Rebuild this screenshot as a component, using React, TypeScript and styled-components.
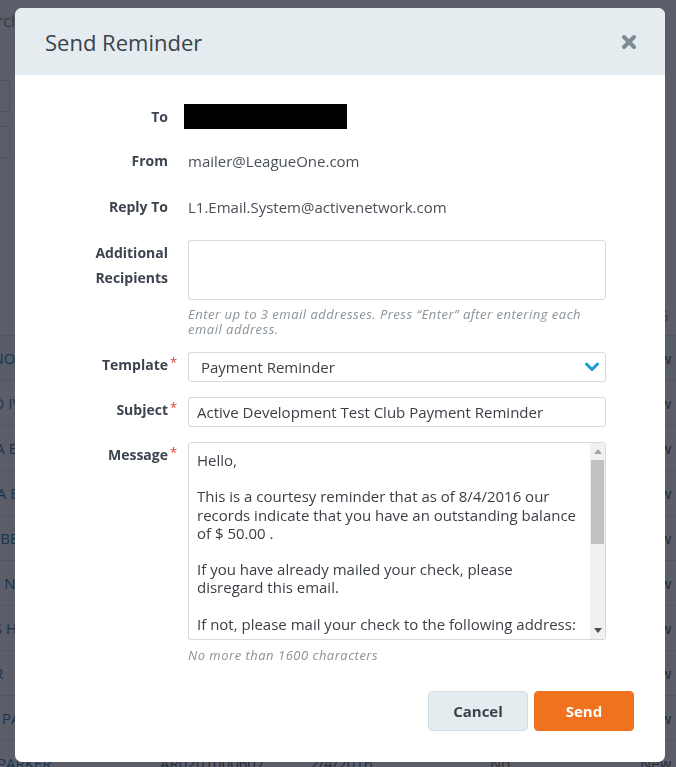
import React from "react";
import styled, { createGlobalStyle } from "styled-components";

const GlobalStyle = createGlobalStyle`
  html, body {
    margin: 0;
    padding: 0;
    background: #ffffff;
    font-family: "Open Sans", Lato, Arial, sans-serif;
  }
  * { box-sizing: border-box; }
`;

const rows = [
  { name: "CONNOR YOUNG", id: "AR0201000598" },
  { name: "DAVID IVINS", id: "AR0201000599" },
  { name: "EMMA BARNES", id: "AR0201000600" },
  { name: "OLIVIA BAILEY", id: "AR0201000601" },
  { name: "LUKE BENSON", id: "AR0201000602" },
  { name: "ANNE NEWTON", id: "AR0201000603" },
  { name: "CHRIS HRUBY", id: "AR0201000604" },
  { name: "PETER", id: "AR0201000605" },
  { name: "JOHN PARKER", id: "AR0201000606" },
  { name: "JANE PARKER", id: "AR0201000607" },
];

const message = `Hello,

This is a courtesy reminder that as of 8/4/2016 our
records indicate that you have an outstanding balance
of $ 50.00 .

If you have already mailed your check, please
disregard this email.

If not, please mail your check to the following address:

Active Development Test Club
1 Main Street
San Diego, CA 92121

Thank you,
Active Development Test Club`;

/* ---------- page behind the dialog ---------- */

const Page = styled.div`
  height: 767px;
  overflow: hidden;
  padding-top: 10px;
  color: #333;
`;

const PageTitle = styled.div`
  margin-left: -30px;
  font-size: 16px;
  color: #888;
  height: 70px;
`;

const SearchBox = styled.div`
  margin-left: -100px;
  width: 110px;
  height: 32px;
  border: 1px solid #d5d8dc;
  border-radius: 3px;
  margin-bottom: 14px;
`;

const Table = styled.div`
  margin-top: 138px;
  margin-left: -40px;
  width: 760px;
`;

const HeadRow = styled.div`
  display: grid;
  grid-template-columns: 200px 150px 180px 150px 60px;
  height: 40px;
  align-items: center;
  font-size: 14px;
  color: #999;
  border-bottom: 1px solid #e2e4e6;
`;

const BodyRow = styled.div<{ $shade?: boolean }>`
  display: grid;
  grid-template-columns: 200px 150px 180px 150px 60px;
  height: 45px;
  align-items: center;
  font-size: 15px;
  color: #555;
  background: ${(p) => (p.$shade ? "#f4f7f9" : "transparent")};
  border-bottom: 1px solid #e2e4e6;
`;

const NameCell = styled.span`
  color: #1a6fa8;
  white-space: nowrap;
`;

/* ---------- dialog ---------- */

const Overlay = styled.div`
  position: fixed;
  inset: 0;
  background: rgba(21, 26, 41, 0.7);
`;

const Modal = styled.div`
  position: absolute;
  top: 8px;
  left: 15px;
  width: 650px;
  height: 754px;
  background: #ffffff;
  border-radius: 7px;
  overflow: hidden;
  display: flex;
  flex-direction: column;
`;

const Header = styled.div`
  height: 67px;
  flex: none;
  background: #e5ecf0;
  display: flex;
  align-items: center;
  justify-content: space-between;
  padding: 0 28px 0 30px;
`;

const Title = styled.h2`
  margin: 0;
  font-size: 22px;
  font-weight: 400;
  color: #3a424a;
`;

const CloseButton = styled.button`
  border: 0;
  background: none;
  padding: 0;
  width: 16px;
  height: 16px;
  display: flex;
  cursor: pointer;
`;

const Body = styled.div`
  padding: 29px 59px 31px 0;
  display: flex;
  flex-direction: column;
  flex: 1;
`;

const Row = styled.div<{ $gap: number }>`
  display: grid;
  grid-template-columns: 153px 418px;
  column-gap: 20px;
  margin-bottom: ${(p) => p.$gap}px;
`;

const Label = styled.label<{ $required?: boolean; $lh?: number }>`
  position: relative;
  justify-self: end;
  text-align: right;
  font-size: 14px;
  font-weight: 700;
  line-height: ${(p) => p.$lh ?? 25}px;
  color: #3c4450;
  &::after {
    content: ${(p) => (p.$required ? '"*"' : "none")};
    position: absolute;
    left: 100%;
    top: 0;
    margin-left: 2px;
    line-height: 20px;
    color: #e0413a;
    font-weight: 400;
    font-size: 13px;
  }
`;

const Value = styled.div`
  font-size: 15px;
  line-height: 20px;
  color: #4a5058;
`;

const Redacted = styled.div`
  width: 163px;
  height: 25px;
  margin-left: -4px;
  background: #000;
`;

const Field = styled.div`
  display: flex;
  flex-direction: column;
`;

const Frame = styled.div<{ $h: number }>`
  width: 418px;
  height: ${(p) => p.$h}px;
  border: 1px solid #d6dadd;
  border-radius: 3px;
  display: flex;
  overflow: hidden;
`;

const Area = styled.textarea`
  flex: 1;
  border: 0;
  resize: none;
  font-family: inherit;
  font-size: 15px;
  line-height: 18.2px;
  color: #3a3f45;
  padding: 8px 2px 8px 8px;
  outline: none;
  overflow: hidden;
  background: transparent;
`;

const ScrollBar = styled.div`
  width: 15px;
  flex: none;
  display: flex;
  flex-direction: column;
  background: #f1f1f1;
`;

const ScrollArrow = styled.div`
  height: 17px;
  flex: none;
  display: flex;
  align-items: center;
  justify-content: center;
`;

const ScrollTrack = styled.div`
  flex: 1;
  padding: 0 1px;
`;

const ScrollThumb = styled.div<{ $size: number }>`
  height: ${(p) => p.$size}px;
  background: #c1c1c1;
`;

const Hint = styled.div<{ $mt: number }>`
  margin-top: ${(p) => p.$mt}px;
  font-size: 13px;
  line-height: 15px;
  letter-spacing: 0.5px;
  font-style: italic;
  color: #8a939a;
`;

const SelectBox = styled.div`
  width: 418px;
  height: 30px;
  border: 1px solid #d6dadd;
  border-radius: 3px;
  display: flex;
  align-items: center;
  justify-content: space-between;
  padding: 0 5px 0 12px;
  font-size: 15px;
  color: #3a3f45;
`;

const TextInput = styled.input`
  width: 418px;
  height: 30px;
  border: 1px solid #d6dadd;
  border-radius: 3px;
  padding: 0 8px;
  font-family: inherit;
  font-size: 15px;
  color: #3a3f45;
  outline: none;
`;

const Footer = styled.div`
  margin-top: auto;
  display: flex;
  justify-content: flex-end;
  gap: 6px;
  margin-right: -28px;
`;

const Button = styled.button<{ $primary?: boolean }>`
  width: 100px;
  height: 40px;
  border-radius: 4px;
  font-family: inherit;
  font-size: 15px;
  font-weight: 700;
  cursor: pointer;
  border: 1px solid ${(p) => (p.$primary ? "#f0711e" : "#d3dfe5")};
  background: ${(p) => (p.$primary ? "#f0711e" : "#e5ecf0")};
  color: ${(p) => (p.$primary ? "#ffffff" : "#3a424a")};
`;

const App: React.FC = () => {
  return (
    <>
      <GlobalStyle />
      <Page>
        <PageTitle>Search</PageTitle>
        <SearchBox />
        <SearchBox />
        <Table>
          <HeadRow>
            <span>NAME</span>
            <span>ORDER</span>
            <span>DATE</span>
            <span>PAID</span>
            <span>LOG</span>
          </HeadRow>
          {rows.map((r, i) => (
            <BodyRow key={r.id} $shade={i === 0}>
              <NameCell>{r.name}</NameCell>
              <span>{r.id}</span>
              <span>2/4/2016</span>
              <span>No</span>
              <span>New</span>
            </BodyRow>
          ))}
        </Table>
      </Page>
      <Overlay>
        <Modal>
          <Header>
            <Title>Send Reminder</Title>
            <CloseButton aria-label="Close">
              <svg width="16" height="16" viewBox="0 0 16 16">
                <path
                  d="M3 3 L13 13 M13 3 L3 13"
                  stroke="#7b8a93"
                  strokeWidth="4"
                  strokeLinecap="round"
                />
              </svg>
            </CloseButton>
          </Header>
          <Body>
            <Row $gap={22}>
              <Label>To</Label>
              <Redacted />
            </Row>
            <Row $gap={26}>
              <Label $lh={20}>From</Label>
              <Value>mailer@LeagueOne.com</Value>
            </Row>
            <Row $gap={23}>
              <Label $lh={20}>Reply To</Label>
              <Value>L1.Email.System@activenetwork.com</Value>
            </Row>
            <Row $gap={15}>
              <Label>
                Additional
                <br />
                Recipients
              </Label>
              <Field>
                <Frame $h={60}>
                  <Area />
                </Frame>
                <Hint $mt={7}>
                  Enter up to 3 email addresses. Press “Enter” after entering each
                  email address.
                </Hint>
              </Field>
            </Row>
            <Row $gap={15}>
              <Label $required>Template</Label>
              <SelectBox>
                <span>Payment Reminder</span>
                <svg width="16" height="12" viewBox="0 0 16 12">
                  <path
                    d="M2.5 3 L8 8.5 L13.5 3"
                    fill="none"
                    stroke="#1b9ad6"
                    strokeWidth="3"
                    strokeLinecap="round"
                    strokeLinejoin="round"
                  />
                </svg>
              </SelectBox>
            </Row>
            <Row $gap={15}>
              <Label $required>Subject</Label>
              <TextInput defaultValue="Active Development Test Club Payment Reminder" />
            </Row>
            <Row $gap={0}>
              <Label $required>Message</Label>
              <Field>
                <Frame $h={198}>
                  <Area defaultValue={message} />
                  <ScrollBar>
                    <ScrollArrow>
                      <svg width="8" height="5" viewBox="0 0 8 5">
                        <path d="M0 5 L4 0 L8 5 Z" fill="#a3a3a3" />
                      </svg>
                    </ScrollArrow>
                    <ScrollTrack>
                      <ScrollThumb $size={84} />
                    </ScrollTrack>
                    <ScrollArrow>
                      <svg width="8" height="5" viewBox="0 0 8 5">
                        <path d="M0 0 L4 5 L8 0 Z" fill="#505050" />
                      </svg>
                    </ScrollArrow>
                  </ScrollBar>
                </Frame>
                <Hint $mt={8}>No more than 1600 characters</Hint>
              </Field>
            </Row>
            <Footer>
              <Button>Cancel</Button>
              <Button $primary>Send</Button>
            </Footer>
          </Body>
        </Modal>
      </Overlay>
    </>
  );
};

export default App;
